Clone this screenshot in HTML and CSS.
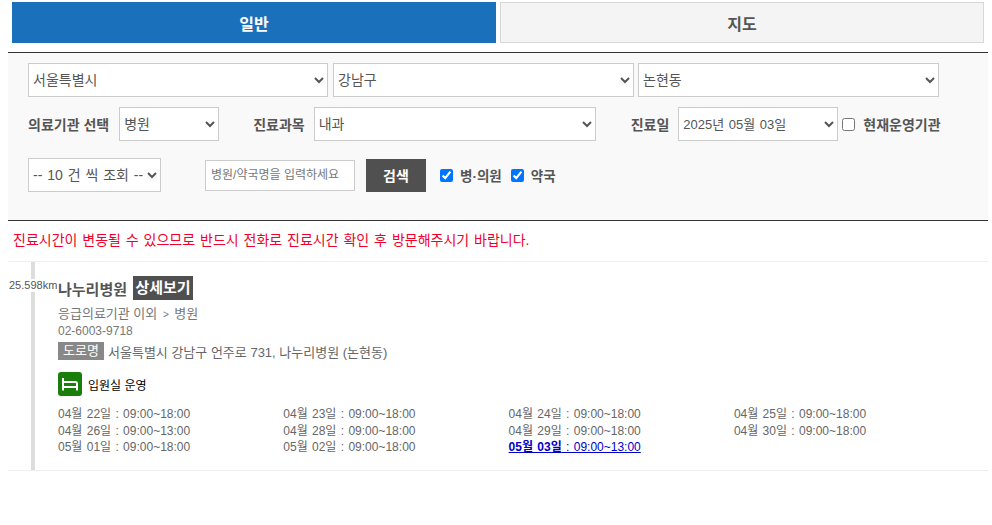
FILE: index.html
```html
<!DOCTYPE html>
<html lang="ko">
<head>
<meta charset="utf-8">
<title>병원 찾기</title>
<link rel="stylesheet" href="styles.css">
</head>
<body>
<nav class="tabs">
  <a class="tab tab-on">일반</a>
  <a class="tab tab-off">지도</a>
</nav>
<form class="panel">
  <div class="row row-region">
    <select class="field f-city"><option>서울특별시</option></select>
    <select class="field f-gu"><option>강남구</option></select>
    <select class="field f-dong"><option>논현동</option></select>
  </div>
  <div class="row row-filter">
    <label class="lbl l-type">의료기관 선택</label>
    <select class="field f-type"><option>병원</option></select>
    <label class="lbl l-dept">진료과목</label>
    <select class="field f-dept"><option>내과</option></select>
    <label class="lbl l-day">진료일</label>
    <select class="field f-day"><option>2025년 05월 03일</option></select>
    <input type="checkbox" class="chk c-now">
    <label class="lbl l-now">현재운영기관</label>
  </div>
  <div class="row row-search">
    <select class="field f-count"><option>-- 10 건 씩 조회 --</option></select>
    <input class="field f-name" type="text" placeholder="병원/약국명을 입력하세요">
    <button type="button" class="btn">검색</button>
    <input type="checkbox" class="chk c-hosp" checked>
    <label class="lbl l-hosp">병·의원</label>
    <input type="checkbox" class="chk c-ph" checked>
    <label class="lbl l-ph">약국</label>
  </div>
</form>
<p class="notice">진료시간이 변동될 수 있으므로 반드시 전화로 진료시간 확인 후 방문해주시기 바랍니다.</p>
<section class="list">
  <article class="item">
    <span class="dist">25.598km</span>
    <div class="title">
      <strong class="name">나누리병원</strong>
      <a class="more">상세보기</a>
    </div>
    <div class="cat">응급의료기관 이외 <span class="gt">&gt;</span> 병원</div>
    <div class="tel">02-6003-9718</div>
    <div class="addr"><span class="road">도로명</span>서울특별시 강남구 언주로 731, 나누리병원 (논현동)</div>
    <div class="feat">
      <span class="ico">
        <svg width="24" height="24" viewBox="0 0 24 24"><path d="M5 6v12.500M5 10H17.500q1.500 0 1.500 1.500v7M5 15H19" fill="none" stroke="#fff" stroke-width="2"/></svg>
      </span>
      <span class="feat-t">입원실 운영</span>
    </div>
    <ul class="hours">
      <li>04월 22일 : 09:00~18:00</li>
      <li>04월 23일 : 09:00~18:00</li>
      <li>04월 24일 : 09:00~18:00</li>
      <li>04월 25일 : 09:00~18:00</li>
      <li>04월 26일 : 09:00~13:00</li>
      <li>04월 28일 : 09:00~18:00</li>
      <li>04월 29일 : 09:00~18:00</li>
      <li>04월 30일 : 09:00~18:00</li>
      <li>05월 01일 : 09:00~18:00</li>
      <li>05월 02일 : 09:00~18:00</li>
      <li class="today"><b>05월 03일</b> : 09:00~13:00</li>
    </ul>
  </article>
</section>
</body>
</html>
```
FILE: styles.css
```css
* { box-sizing: border-box; }
body {
  margin: 0;
  padding: 2px 4px 0 8px;
  background: #fff;
  color: #555;
  font-family: "Liberation Sans", "Noto Sans CJK KR", sans-serif;
  font-size: 12px;
}
.tabs { display: grid; grid-template-columns: 484px 484px; gap: 4px; padding: 0 4px; height: 41px; }
.tab {
  display: flex;
  align-items: center;
  justify-content: center;
  font-size: 16px;
  font-weight: 700;
}
.tab-on { background: #1a70ba; color: #fff; }
.tab-off { background: #f4f4f4; border: 1px solid #d8d8d8; color: #555; }

.panel {
  margin-top: 9px;
  height: 169px;
  padding: 10px 20px 0;
  background: #f9f9f9;
  border-top: 1px solid #333;
  border-bottom: 1px solid #333;
}
.row { display: flex; align-items: center; }
.row-region { gap: 5px; height: 34px; }
.row-filter { margin-top: 10px; height: 34px; }
.row-search { margin-top: 17px; height: 34px; }

.field {
  height: 34px;
  padding: 0;
  background: #fff;
  border: 1px solid #ccc;
  border-radius: 0;
  color: #555;
  font-family: inherit;
  font-size: 14px;
}
.f-city { width: 300px; }
.f-gu { width: 301px; }
.f-dong { width: 301px; margin-left: -1px; }
.f-type { width: 100px; margin-left: 10px; }
.f-dept { width: 282px; margin-left: 9px; }
.f-day { width: 160px; margin-left: 9px; font-size: 13px; word-spacing: 1px; }
.f-count { width: 133px; word-spacing: 1px; }
.f-name {
  width: 150px;
  height: 31px;
  margin-left: 44px;
  padding: 0 5px;
  font-size: 12px;
}
.f-name::placeholder { color: #777; opacity: 1; }

.lbl { color: #555; font-size: 14px; font-weight: 700; white-space: nowrap; }
.l-dept { margin-left: 34px; }
.l-day { margin-left: 35px; }
.chk { width: 13px; height: 13px; margin: 0; }
.c-now { margin-left: 4px; }
.l-now { margin-left: 8px; }
.btn {
  width: 60px;
  height: 33px;
  margin-left: 11px;
  border: 0;
  background: #505050;
  color: #fff;
  font-family: inherit;
  font-size: 14px;
  font-weight: 700;
}
.c-hosp { margin-left: 14px; }
.l-hosp { margin-left: 7px; font-size: 13.500px; }
.c-ph { margin-left: 9px; }
.l-ph { margin-left: 7px; font-size: 13.500px; }

.notice {
  margin: 0;
  height: 41px;
  padding: 11px 0 0 5px;
  color: #f0002a;
  font-size: 14px;
  line-height: 17px;
  word-spacing: 1px;
  border-bottom: 1px solid #eee;
}
.list { border-bottom: 1px solid #eee; }
.item {
  position: relative;
  height: 208px;
  margin-left: 23px;
  padding: 14px 0 0 23px;
  border-left: 4px solid #ddd;
}
.dist {
  position: absolute;
  left: -27px;
  top: 17px;
  padding: 0 1px;
  background: #fff;
  font-size: 11px;
  line-height: 13px;
}
.title { display: flex; align-items: center; gap: 6px; height: 24px; }
.name { font-size: 15px; font-weight: 700; }
.more {
  width: 60px;
  height: 24px;
  background: #505050;
  color: #fff;
  font-size: 15px;
  font-weight: 700;
  line-height: 24px;
  text-align: center;
}
.cat { margin-top: 5px; font-size: 13px; line-height: 17px; color: #777; }
.gt { font-size: 10px; padding: 0 2px; }
.tel { line-height: 17px; color: #777; }
.addr { display: flex; align-items: center; margin-top: 2px; height: 18px; font-size: 13px; color: #666; }
.road {
  width: 46px;
  height: 18px;
  margin-right: 4px;
  background: #888;
  color: #fff;
  font-size: 13px;
  line-height: 18px;
  text-align: center;
}
.feat { display: flex; align-items: center; gap: 6px; margin-top: 12px; }
.ico { display: flex; width: 24px; height: 24px; background: #1a7f0a; border-radius: 3px; }
.feat-t { color: #000; font-size: 12px; }
.hours {
  display: grid;
  grid-template-columns: repeat(4, 225.300px);
  margin: 10px 0 0;
  padding: 0;
  list-style: none;
  color: #666;
  word-spacing: 1px;
  line-height: 16.500px;
}
.today { color: #00c; text-decoration: underline; }
```
